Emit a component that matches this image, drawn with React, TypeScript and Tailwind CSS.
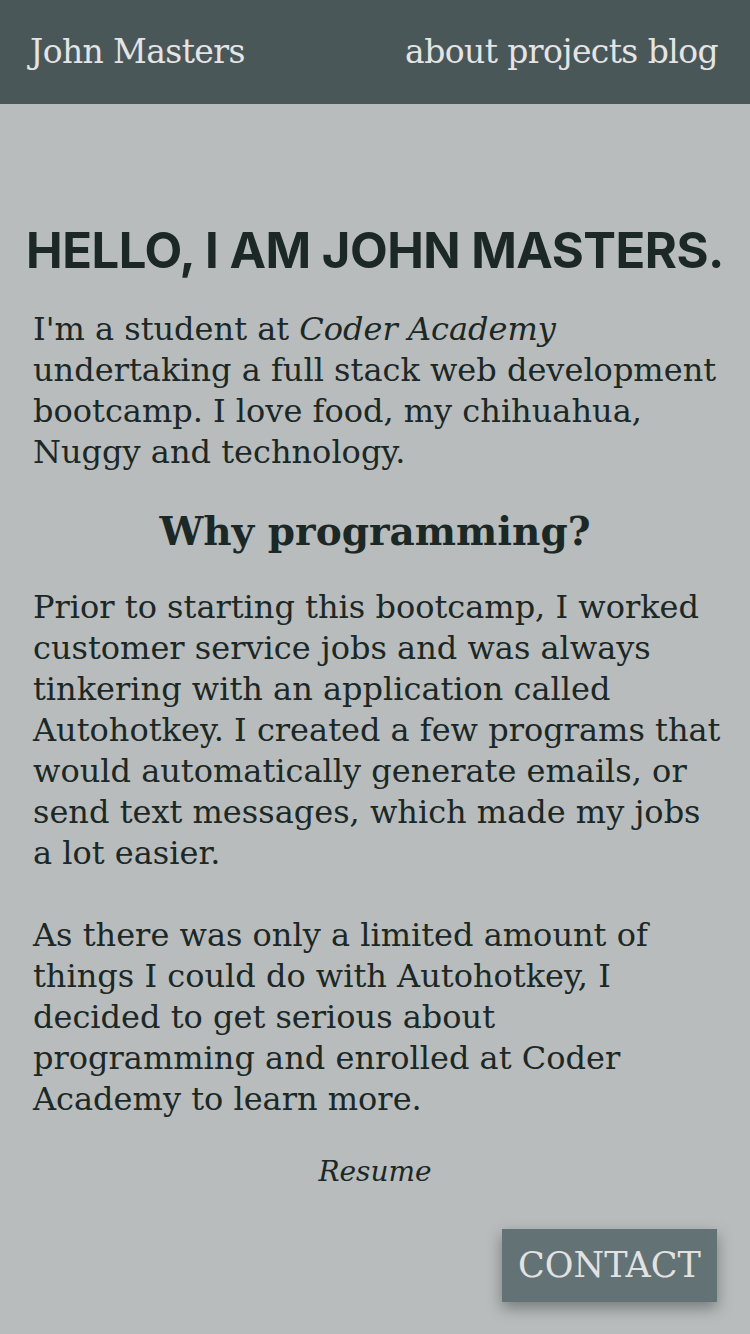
import React from "react";

const serif = { fontFamily: '"DejaVu Serif", "Liberation Serif", serif' };

export default function App() {
  return (
    <div className="min-h-[1334px] w-[750px] bg-[#b8bcbd] text-[#1b2826]" style={serif}>
      <header className="flex h-[104px] items-center justify-between bg-[#4a5759] pl-[30px] pr-[32px] text-[#e4e4e4]">
        <div className="text-[33px] tracking-[-0.6px]">John Masters</div>
        <nav className="flex gap-[10px] text-[33px] tracking-[-0.6px]">
          <span>about</span>
          <span>projects</span>
          <span>blog</span>
        </nav>
      </header>
      <main className="px-[33px] pt-[122px]">
        <h1
          className="-mx-[10px] text-center text-[49px] font-bold leading-none tracking-[-0.5px] text-[#1b2826]"
          style={{ fontFamily: '"Inter", "Roboto", "Liberation Sans", sans-serif' }}
        >
          HELLO, I AM JOHN MASTERS.
        </h1>
        <p className="mt-[34px] whitespace-nowrap text-[32px] leading-[41px]">
          I'm a student at <em>Coder Academy</em>
          <br />
          undertaking a full stack web development
          <br />
          bootcamp. I love food, my chihuahua,
          <br />
          Nuggy and technology.
        </p>
        <h2 className="mt-[34px] text-center text-[39px] font-bold leading-[48px]">Why programming?</h2>
        <p className="mt-[32px] whitespace-nowrap text-[32px] leading-[41px]">
          Prior to starting this bootcamp, I worked
          <br />
          customer service jobs and was always
          <br />
          tinkering with an application called
          <br />
          Autohotkey. I created a few programs that
          <br />
          would automatically generate emails, or
          <br />
          send text messages, which made my jobs
          <br />a lot easier.
        </p>
        <p className="mt-[41px] whitespace-nowrap text-[32px] leading-[41px]">
          As there was only a limited amount of
          <br />
          things I could do with Autohotkey, I
          <br />
          decided to get serious about
          <br />
          programming and enrolled at Coder
          <br />
          Academy to learn more.
        </p>
        <p className="mt-[31px] text-center text-[28px] italic leading-[41px]">Resume</p>
        <div className="mt-[37px] flex justify-end">
          <button className="flex h-[73px] w-[215px] items-center justify-center bg-[#637275] text-[35px] text-[#e2e2e2] shadow-[0_6px_14px_rgba(0,0,0,0.35)]">
            CONTACT
          </button>
        </div>
      </main>
    </div>
  );
}
